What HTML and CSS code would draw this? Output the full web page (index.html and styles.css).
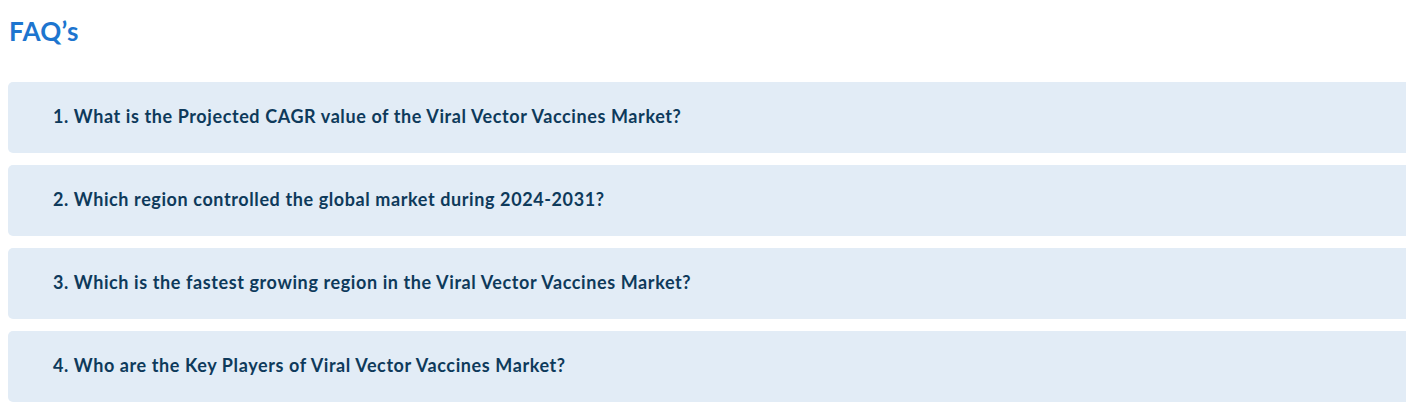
FILE: index.html
```html
<!DOCTYPE html>
<html>
<head>
    <meta charset="utf-8">
    <title>FAQ's</title>
    <link rel="stylesheet" href="styles.css">
</head>
<body>
    <div class="faq-section">
        <h2 class="faq-title">FAQ’s</h2>
        <div class="faq-list">
            <div class="faq-item">1. What is the Projected CAGR value of the Viral Vector Vaccines Market?</div>
            <div class="faq-item">2. Which region controlled the global market during 2024-2031?</div>
            <div class="faq-item">3. Which is the fastest growing region in the Viral Vector Vaccines Market?</div>
            <div class="faq-item">4. Who are the Key Players of Viral Vector Vaccines Market?</div>
        </div>
    </div>
</body>
</html>
```

FILE: styles.css
```css
body {
    margin: 0;
    background-color: #fff;
    font-family: 'Lato', 'Noto Sans', sans-serif;
    overflow-x: hidden;
}
.faq-section {
    padding: 16px 0 0 8px;
}
.faq-title {
    margin: 0 0 0 1px;
    font-size: 26px;
    font-weight: 700;
    color: #1d75cf;
    line-height: 30px;
    letter-spacing: 0.3px;
}
.faq-list {
    display: flex;
    flex-direction: column;
    gap: 12px;
    margin-top: 36px;
    margin-right: -20px;
}
.faq-item {
    background-color: #e2ecf6;
    border-radius: 5px;
    height: 71px;
    display: flex;
    align-items: center;
    padding-left: 45px;
    padding-bottom: 3px;
    box-sizing: border-box;
    font-size: 18px;
    font-weight: 700;
    letter-spacing: 0.6px;
    color: #0e3a5b;
}
```
